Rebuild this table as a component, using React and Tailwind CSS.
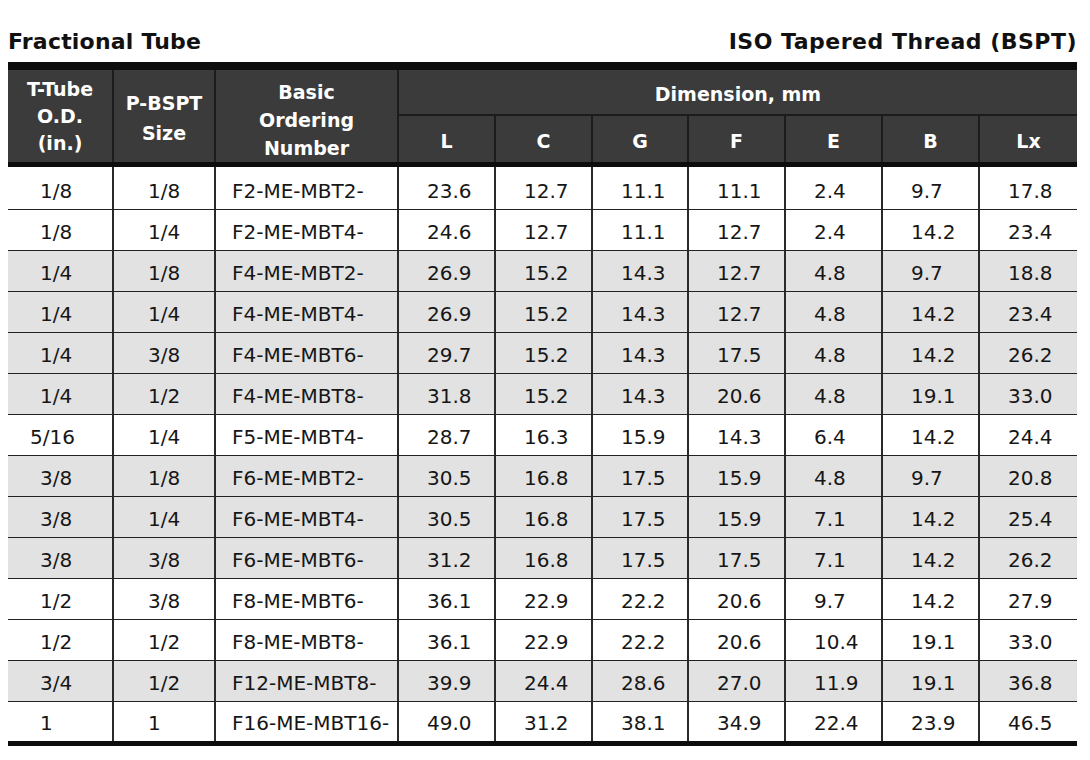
const rows = [
  ['1/8', '1/8', 'F2-ME-MBT2-', '23.6', '12.7', '11.1', '11.1', '2.4', '9.7', '17.8', false],
  ['1/8', '1/4', 'F2-ME-MBT4-', '24.6', '12.7', '11.1', '12.7', '2.4', '14.2', '23.4', false],
  ['1/4', '1/8', 'F4-ME-MBT2-', '26.9', '15.2', '14.3', '12.7', '4.8', '9.7', '18.8', true],
  ['1/4', '1/4', 'F4-ME-MBT4-', '26.9', '15.2', '14.3', '12.7', '4.8', '14.2', '23.4', true],
  ['1/4', '3/8', 'F4-ME-MBT6-', '29.7', '15.2', '14.3', '17.5', '4.8', '14.2', '26.2', true],
  ['1/4', '1/2', 'F4-ME-MBT8-', '31.8', '15.2', '14.3', '20.6', '4.8', '19.1', '33.0', true],
  ['5/16', '1/4', 'F5-ME-MBT4-', '28.7', '16.3', '15.9', '14.3', '6.4', '14.2', '24.4', false],
  ['3/8', '1/8', 'F6-ME-MBT2-', '30.5', '16.8', '17.5', '15.9', '4.8', '9.7', '20.8', true],
  ['3/8', '1/4', 'F6-ME-MBT4-', '30.5', '16.8', '17.5', '15.9', '7.1', '14.2', '25.4', true],
  ['3/8', '3/8', 'F6-ME-MBT6-', '31.2', '16.8', '17.5', '17.5', '7.1', '14.2', '26.2', true],
  ['1/2', '3/8', 'F8-ME-MBT6-', '36.1', '22.9', '22.2', '20.6', '9.7', '14.2', '27.9', false],
  ['1/2', '1/2', 'F8-ME-MBT8-', '36.1', '22.9', '22.2', '20.6', '10.4', '19.1', '33.0', false],
  ['3/4', '1/2', 'F12-ME-MBT8-', '39.9', '24.4', '28.6', '27.0', '11.9', '19.1', '36.8', true],
  ['1', '1', 'F16-ME-MBT16-', '49.0', '31.2', '38.1', '34.9', '22.4', '23.9', '46.5', false],
];

const letters = ['L', 'C', 'G', 'F', 'E', 'B', 'Lx'];
const grid = 'grid grid-cols-[106px_102px_183px_97px_97px_96px_97px_97px_97px_97px]';

export default function App() {
  return (
    <div
      className="w-[1090px] h-[760px] bg-white text-[#161616] overflow-hidden"
      style={{ fontFamily: '"DejaVu Sans", Verdana, sans-serif' }}
    >
      <div className="ml-[8px] w-[1069px]">
        <div className="mt-[29px] h-[26px] mb-[7px] flex justify-between items-center text-[22px] leading-[26px] font-bold text-[#111]">
          <span className="tracking-[0.2px]">Fractional Tube</span>
          <span className="tracking-[0.5px]">ISO Tapered Thread (BSPT)</span>
        </div>

        <div className="h-[8px] bg-[#0d0d0d]" />
        <div className={`${grid} grid-rows-[46px_46px] bg-[#3b3b3b] text-white font-bold text-[19px]`}>
          <div className="row-span-2 border-r-2 border-[#1c1c1c] flex items-center justify-center text-center leading-[27px] pt-[1px]">
            <div>T-Tube<br />O.D.<br />(in.)</div>
          </div>
          <div className="row-span-2 border-r-2 border-[#1c1c1c] flex items-center justify-center text-center leading-[30px] pt-[4px]">
            <div>P-BSPT<br />Size</div>
          </div>
          <div className="row-span-2 border-r-2 border-[#1c1c1c] flex items-center justify-center text-center leading-[28px] pt-[8px]">
            <div>Basic<br />Ordering<br />Number</div>
          </div>
          <div className="col-span-7 border-b-2 border-[#1c1c1c] flex items-center justify-center pt-[4px]">
            Dimension, mm
          </div>
          {letters.map((l, i) => (
            <div
              key={l}
              className={`flex items-center justify-center pt-[4px] ${i < 6 ? 'border-r-2 border-[#1c1c1c]' : ''}`}
            >
              {l}
            </div>
          ))}
        </div>
        <div className="h-[5px] bg-[#0d0d0d]" />

        {rows.map((r, ri) => {
          const first = ri === 0;
          const last = ri === rows.length - 1;
          const h = first ? 'h-[43px]' : last ? 'h-[39px]' : 'h-[41px]';
          const pt = first ? 'pt-[6px]' : last ? 'pt-[3px]' : 'pt-[4px]';
          return (
            <div
              key={ri}
              className={`${grid} ${h} text-[20px] ${r[10] ? 'bg-[#e2e2e2]' : 'bg-white'} ${!last ? 'border-b border-[#222]' : ''}`}
            >
              {r.slice(0, 10).map((c, ci) => {
                const pad = ci === 0 ? (c === '5/16' ? 'pl-[22px]' : 'pl-[32px]') : ci === 1 ? 'pl-[34px]' : ci === 2 ? 'pl-[16px]' : 'pl-[28px]';
                return (
                  <div
                    key={ci}
                    className={`flex items-center ${pt} ${pad} ${ci < 9 ? 'border-r-2 border-[#2a2a2a]' : ''}`}
                  >
                    {c}
                  </div>
                );
              })}
            </div>
          );
        })}
        <div className="h-[5px] bg-[#0d0d0d]" />
      </div>
    </div>
  );
}
